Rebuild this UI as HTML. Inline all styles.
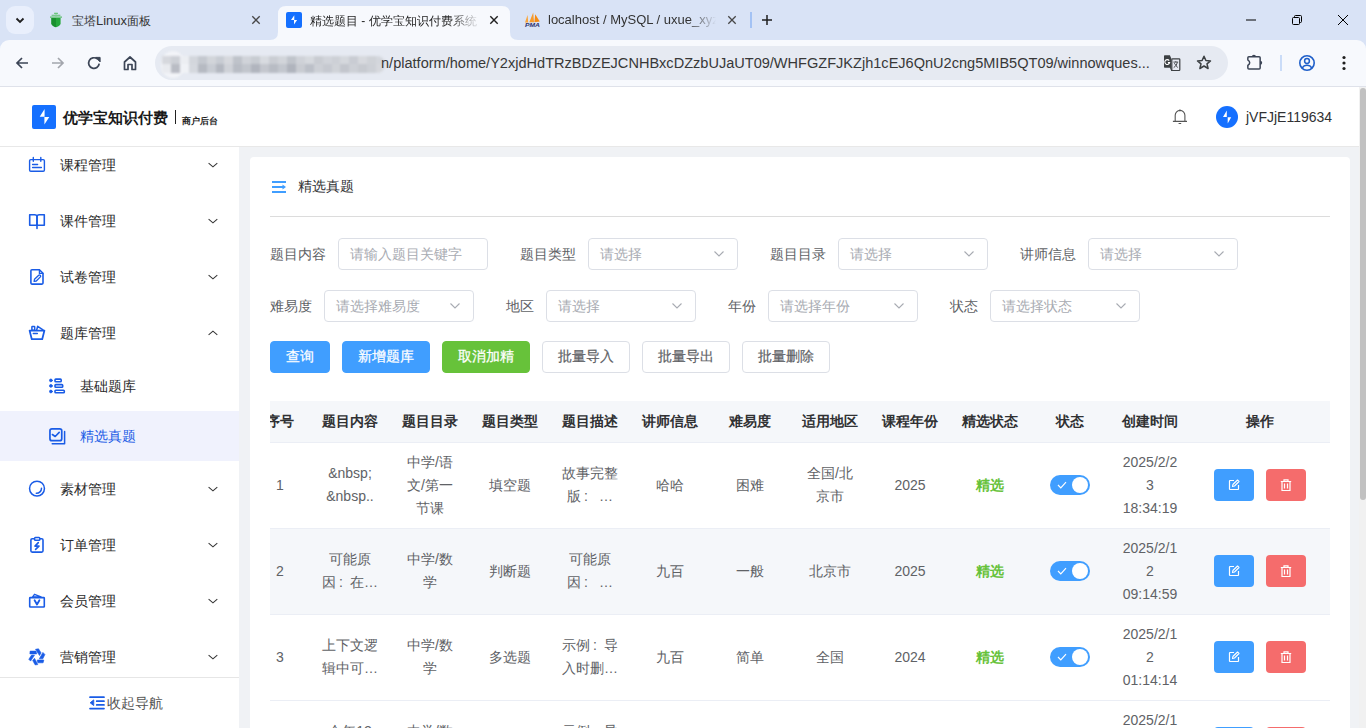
<!DOCTYPE html>
<html><head><meta charset="utf-8">
<style>
*{box-sizing:border-box;margin:0;padding:0}
html,body{width:1366px;height:728px;overflow:hidden}
body{font-family:"Liberation Sans",sans-serif;font-size:14px;color:#303133;background:#d9e3f6;position:relative}
.abs{position:absolute}
svg{display:block}
/* browser chrome */
#tabs{left:0;top:0;width:1366px;height:40px;background:#d9e3f6}
.tabbtn{left:6px;top:6px;width:28px;height:28px;border-radius:9px;background:#e9effc}
.tabtxt{font-size:12px;color:#1f1f1f;white-space:nowrap;top:13px}
#toolbar{left:0;top:40px;width:1366px;height:47px;background:#f7f9fd;border-bottom:1px solid #dfe2ea;border-radius:9px 9px 0 0}
#addr{left:155px;top:46px;width:1073px;height:34px;border-radius:17px;background:#e6eaf2}
.url{left:381px;top:54px;font-size:14.55px;line-height:18px;color:#383838;white-space:nowrap}
/* page */
#page{left:0;top:87px;width:1359px;height:641px;background:#f0f2f5;overflow:hidden}
#hdr{left:0;top:0;width:1359px;height:60px;background:#fff;border-bottom:1px solid #e8e8e8;z-index:2}
#side{left:0;top:60px;width:239px;height:581px;background:#fff}
.mi{left:0;width:239px;height:56px}
.mi .t{position:absolute;left:60px;top:0;line-height:56px;font-size:14px;color:#2b2b2b}
.mi .ic{position:absolute;left:28px;top:20px}
.mi .ch{position:absolute;left:207px;top:24px}
#card{left:250px;top:70px;width:1100px;height:620px;background:#fff;border-radius:4px;overflow:hidden}
.lab{font-size:14px;line-height:32px;color:#606266;white-space:nowrap}
.inp{width:150px;height:32px;border:1px solid #dcdfe6;border-radius:4px;background:#fff;font-size:14px;line-height:30px;padding-left:11px;color:#a8abb2;white-space:nowrap}
.inp .sc{position:absolute;right:12px;top:11px}
.btn{height:32px;border-radius:4px;font-size:14px;line-height:29px;text-align:center;border:1px solid transparent;white-space:nowrap}
.bp{background:#409eff;color:#fff;border-color:#409eff;-webkit-text-stroke:.25px #fff}
.bs{background:#67c23a;color:#fff;border-color:#67c23a;-webkit-text-stroke:.25px #fff}
.bd{background:#fff;color:#606266;border-color:#dcdfe6;-webkit-text-stroke:.2px #606266}
.th{width:100px;height:41px;line-height:41px;text-align:center;font-weight:bold;color:#303133;font-size:14px;white-space:nowrap}
.td{width:100px;height:86px;display:flex;align-items:center;justify-content:center;text-align:center;font-size:14px;line-height:23px;color:#606266;white-space:nowrap}
.cl{display:inline-block;width:14px;text-align:left;padding-left:3px}
.sw{position:relative;width:40px;height:20px;border-radius:10px;background:#409eff}
.knob{position:absolute;left:22px;top:2px;width:16px;height:16px;border-radius:50%;background:#fff}
.ob{width:40px;height:32px;border-radius:4px;display:flex;align-items:center;justify-content:center}
#sb{left:1359px;top:87px;width:7px;height:641px;background:#f1f1f1}
#sbt{left:1360px;top:88px;width:6px;height:412px;background:#c1c1c1;border-radius:3px}
</style></head><body>
<div id="tabs" class="abs"></div>
<div class="abs tabbtn"><svg width="28" height="28"><path d="M10.5 12.5l3.5 3.5 3.5-3.5" fill="none" stroke="#1f1f1f" stroke-width="1.8"/></svg></div>
<!-- tab1 -->
<svg class="abs" style="left:48px;top:12px" width="16" height="16" viewBox="0 0 16 16"><path d="M3.4 6H12.6V11.6Q12.6 13.9 8 15.2Q3.4 13.9 3.4 11.6Z" fill="#25a83c"/><path d="M3.4 6H8V15.2Q3.4 13.9 3.4 11.6Z" fill="#1a8f2f"/><path d="M6.2 1.4H9.8M3.6 3.3H12.4M2 5.1H14" stroke="#5bbf6c" stroke-width="1.1"/><path d="M8 1v5" stroke="#7fd08d" stroke-width=".9"/></svg>
<div class="abs tabtxt" style="left:72px;color:#333">宝塔<span style="font-size:13px">Linux</span>面板</div>
<svg class="abs" style="left:251px;top:15px" width="10" height="10"><path d="M1.3 1.3l7.4 7.4M8.7 1.3l-7.4 7.4" stroke="#474747" stroke-width="1.3"/></svg>
<!-- active tab -->
<svg class="abs" style="left:270px;top:6px" width="248" height="34" viewBox="0 0 248 34"><path d="M0 34 Q8 34 8 26 V8 Q8 0 16 0 H232 Q240 0 240 8 V26 Q240 34 248 34 Z" fill="#f7f9fd"/></svg>
<div class="abs" style="left:286px;top:12px;width:16px;height:16px;background:#1570ff;border-radius:2px"><svg width="16" height="16" viewBox="0 0 16 16"><path d="M8.3 3.2L5 7.9H8.3ZM8 8.1H11.1L8 12.6Z" fill="#fff"/></svg></div>
<div class="abs tabtxt" style="left:310px;width:172px;overflow:hidden;-webkit-mask-image:linear-gradient(90deg,#000 80%,transparent)">精选题目 - 优学宝知识付费系统</div>
<svg class="abs" style="left:489px;top:15px" width="10" height="10"><path d="M1.3 1.3l7.4 7.4M8.7 1.3l-7.4 7.4" stroke="#1f1f1f" stroke-width="1.4"/></svg>
<!-- tab3 -->
<svg class="abs" style="left:523px;top:12px" width="18" height="16" viewBox="0 0 18 16"><path d="M2 10.5L4.6 2.9L5.2 10.5Z" fill="#f9a53b"/><path d="M6.3 10.3L10.2 0.6L11 10.3Z" fill="#f79a2a"/><path d="M11.4 10.3L12.2 2.3L16.8 9.5Z" fill="#f68a12"/><text x="2" y="15" font-size="5.6" font-weight="bold" font-style="italic" fill="#2d3470" font-family="Liberation Sans" textLength="15" lengthAdjust="spacingAndGlyphs">PMA</text></svg>
<div class="abs tabtxt" style="left:548px;top:12px;font-size:13px;color:#333;width:168px;overflow:hidden;-webkit-mask-image:linear-gradient(90deg,#000 84%,transparent)">localhost / MySQL / uxue_xyz</div>
<svg class="abs" style="left:727px;top:15px" width="10" height="10"><path d="M1.3 1.3l7.4 7.4M8.7 1.3l-7.4 7.4" stroke="#474747" stroke-width="1.3"/></svg>
<div class="abs" style="left:750px;top:12px;width:1.5px;height:16px;background:#a3c2f4"></div>
<svg class="abs" style="left:761px;top:14px" width="12" height="12"><path d="M6 1v10M1 6h10" stroke="#1f1f1f" stroke-width="1.5"/></svg>
<!-- window controls -->
<svg class="abs" style="left:1245px;top:14px" width="12" height="12"><path d="M1 6h10" stroke="#000" stroke-width="1"/></svg>
<svg class="abs" style="left:1291px;top:14px" width="12" height="12"><rect x="1.5" y="3.5" width="7" height="7" rx="1" fill="none" stroke="#000"/><path d="M3.5 3.5V2.5a1 1 0 0 1 1-1h5a1 1 0 0 1 1 1v5a1 1 0 0 1-1 1h-1" fill="none" stroke="#000"/></svg>
<svg class="abs" style="left:1337px;top:14px" width="12" height="12"><path d="M1 1l10 10M11 1L1 11" stroke="#000" stroke-width="1"/></svg>
<div id="toolbar" class="abs"></div>
<div id="addr" class="abs"></div>
<svg class="abs" style="left:14px;top:55px" width="16" height="16" viewBox="0 0 16 16"><path d="M14 8H3M8 3L3 8l5 5" fill="none" stroke="#3c4556" stroke-width="1.7"/></svg>
<svg class="abs" style="left:50px;top:55px" width="16" height="16" viewBox="0 0 16 16"><path d="M2 8h11M8 3l5 5-5 5" fill="none" stroke="#a3a6ad" stroke-width="1.7"/></svg>
<svg class="abs" style="left:86px;top:55px" width="16" height="16" viewBox="0 0 16 16"><path d="M13.2 8.6A5.3 5.3 0 1 1 11.2 3.9" fill="none" stroke="#3c4556" stroke-width="1.7"/><path d="M9.6 2.4H14.1V6.9Z" fill="#3c4556" stroke="#3c4556" stroke-width="1" stroke-linejoin="round"/></svg>
<svg class="abs" style="left:122px;top:55px" width="16" height="16" viewBox="0 0 16 16"><path d="M2.5 14.5V7L8 2l5.5 5v7.5H10v-5H6v5z" fill="none" stroke="#3c4556" stroke-width="1.7" stroke-linejoin="round"/></svg>
<div class="abs" style="left:161px;top:51px;width:24px;height:27px;border-radius:50%;background:#f2f4f8;filter:blur(1px)"></div>
<div class="abs" style="left:162px;top:56px;width:223px;height:17px;overflow:hidden;filter:blur(1.2px);border-radius:0 8px 8px 0">
<div style="display:flex">
<div style="width:9px;height:8px;background:#d6d8dd"></div><div style="width:9px;height:8px;background:#cdd0d6"></div><div style="width:9px;height:8px;background:#eceef2"></div><div style="width:9px;height:8px;background:#d3d6dc"></div><div style="width:9px;height:8px;background:#c4c8cf"></div><div style="width:9px;height:8px;background:#d2d5da"></div><div style="width:9px;height:8px;background:#c8ccd3"></div><div style="width:9px;height:8px;background:#d6d8dd"></div><div style="width:9px;height:8px;background:#bfc3ca"></div><div style="width:9px;height:8px;background:#d0d3d9"></div><div style="width:9px;height:8px;background:#c8ccd2"></div><div style="width:9px;height:8px;background:#d8dbe0"></div><div style="width:9px;height:8px;background:#cacdd3"></div><div style="width:9px;height:8px;background:#d2d5da"></div><div style="width:9px;height:8px;background:#c0c4cb"></div><div style="width:9px;height:8px;background:#cfd2d8"></div><div style="width:9px;height:8px;background:#d6d9de"></div><div style="width:9px;height:8px;background:#c9ccd2"></div><div style="width:9px;height:8px;background:#d1d4da"></div><div style="width:9px;height:8px;background:#cdd0d6"></div><div style="width:9px;height:8px;background:#d5d8dd"></div><div style="width:9px;height:8px;background:#c9ccd3"></div><div style="width:9px;height:8px;background:#d7d9de"></div><div style="width:9px;height:8px;background:#cfd2d7"></div><div style="width:9px;height:8px;background:#d3d6dc"></div></div>
<div style="display:flex">
<div style="width:9px;height:9px;background:#e9ebef"></div><div style="width:9px;height:9px;background:#b9bcc4"></div><div style="width:9px;height:9px;background:#f0f2f6"></div><div style="width:9px;height:9px;background:#d5d8de"></div><div style="width:9px;height:9px;background:#b6bac2"></div><div style="width:9px;height:9px;background:#c8ccd3"></div><div style="width:9px;height:9px;background:#b4b8c1"></div><div style="width:9px;height:9px;background:#cfd2d8"></div><div style="width:9px;height:9px;background:#b9bdc5"></div><div style="width:9px;height:9px;background:#c2c6cd"></div><div style="width:9px;height:9px;background:#b1b5be"></div><div style="width:9px;height:9px;background:#c4c7ce"></div><div style="width:9px;height:9px;background:#b8bcc4"></div><div style="width:9px;height:9px;background:#c3c7ce"></div><div style="width:9px;height:9px;background:#b0b4bd"></div><div style="width:9px;height:9px;background:#c9ccd2"></div><div style="width:9px;height:9px;background:#bcc0c8"></div><div style="width:9px;height:9px;background:#cdd0d6"></div><div style="width:9px;height:9px;background:#c6c9d0"></div><div style="width:9px;height:9px;background:#d0d3d8"></div><div style="width:9px;height:9px;background:#c3c6cd"></div><div style="width:9px;height:9px;background:#cdd0d6"></div><div style="width:9px;height:9px;background:#c7cad0"></div><div style="width:9px;height:9px;background:#cdd0d6"></div><div style="width:9px;height:9px;background:#d6d8dd"></div></div>
</div>
<div class="abs url">n/platform/home/Y2xjdHdTRzBDZEJCNHBxcDZzbUJaUT09/WHFGZFJKZjh1cEJ6QnU2cng5MIB5QT09/winnowques...</div>
<svg class="abs" style="left:1158px;top:50px" width="26" height="26" viewBox="0 0 26 26"><path d="M6.7 5.3H11.9L13.3 8.4V17.7H12.8L14.3 20.9H13.3L11.9 17.7H6.7a.7 .7 0 0 1-.7-.7V6a.7 .7 0 0 1 .7-.7Z" fill="#3c4043"/><rect x="13.8" y="8.8" width="8" height="11.7" rx=".7" fill="#e6eaf2" stroke="#3c4043" stroke-width="1.2"/><path d="M13.3 17.6L14.4 20.9H13.6Z" fill="#3c4043"/><path d="M11.2 10.6A2.4 2.4 0 1 0 11.6 12.6H9.9" fill="none" stroke="#fff" stroke-width="1.1"/><path d="M15.4 12.1H20.2M17.8 11.2V12.1M16.3 13.2L19.6 17.6M19.3 12.3C18.8 14.7 17.5 16.5 15.7 17.6" fill="none" stroke="#3c4043" stroke-width=".9"/></svg>
<svg class="abs" style="left:1195px;top:54px" width="18" height="18" viewBox="0 0 18 18"><path d="M9 2.2l1.9 4.3 4.6.4-3.5 3 1.1 4.6L9 12l-4.1 2.5 1.1-4.6-3.5-3 4.6-.4z" fill="none" stroke="#3c4043" stroke-width="1.5" stroke-linejoin="round"/></svg>
<svg class="abs" style="left:1240px;top:50px" width="26" height="26" viewBox="0 0 26 26"><path d="M7.85 7.75A1 1 0 0 1 8.85 6.75H19.15A1 1 0 0 1 20.15 7.75V18.05A1 1 0 0 1 19.15 19.05H8.85A1 1 0 0 1 7.85 18.05V15.4Q11.55 12.65 7.85 9.9Z" fill="none" stroke="#3c4556" stroke-width="1.5" stroke-linejoin="round"/><path d="M11.8 6.8A2.1 2.1 0 0 1 16 6.8ZM20.1 10.7A2.1 2.1 0 0 1 20.1 14.9Z" fill="#3c4556"/></svg>
<div class="abs" style="left:1280px;top:55px;width:2px;height:16px;background:#cadcf8"></div>
<svg class="abs" style="left:1298px;top:54px" width="18" height="18" viewBox="0 0 18 18"><circle cx="9" cy="9" r="7.2" fill="none" stroke="#1f5fc9" stroke-width="1.6"/><circle cx="9" cy="7" r="2.4" fill="none" stroke="#1f5fc9" stroke-width="1.5"/><path d="M4.3 14c1-2 2.7-2.8 4.7-2.8s3.7.8 4.7 2.8" fill="none" stroke="#1f5fc9" stroke-width="1.5"/></svg>
<svg class="abs" style="left:1338px;top:54px" width="12" height="18" viewBox="0 0 12 18"><circle cx="6" cy="3.5" r="1.6" fill="#1f1f1f"/><circle cx="6" cy="9" r="1.6" fill="#1f1f1f"/><circle cx="6" cy="14.5" r="1.6" fill="#1f1f1f"/></svg>
<div id="page" class="abs">
  <div id="hdr" class="abs">
    <div class="abs" style="left:32px;top:18px;width:24px;height:24px;background:#1570ff;border-radius:2px"><svg width="24" height="24" viewBox="0 0 24 24"><path d="M12.6 4.1L7.7 11.8H12.6ZM12.4 12H17.3L12.4 19.5Z" fill="#fff"/></svg></div>
    <div class="abs" style="left:63px;top:20px;font-size:15px;font-weight:bold;color:#1a1a1a;line-height:22px">优学宝知识付费</div>
    <div class="abs" style="left:175px;top:23px;width:1.4px;height:14px;background:#222"></div>
    <div class="abs" style="left:182px;top:27px;font-size:9px;font-weight:bold;color:#1a1a1a;line-height:14px">商户后台</div>
    <svg class="abs" style="left:1170px;top:21px" width="20" height="20" viewBox="0 0 20 20"><path d="M5.2 13.4V7.2a4.85 4.85 0 0 1 9.7 0v6.2M2.9 13.4h14.1" fill="none" stroke="#555" stroke-width="1.1"/><circle cx="9.9" cy="2.4" r=".9" fill="#555"/><path d="M8.6 15.5h2.6" stroke="#555" stroke-width="1"/></svg>
    <div class="abs" style="left:1216px;top:19px;width:22px;height:22px;border-radius:50%;background:#1570ff"><svg width="22" height="22" viewBox="0 0 22 22"><path d="M10.8 4.5V11H7ZM11.7 11.3H15.2L11.7 17.4Z" fill="#fff"/></svg></div>
    <div class="abs" style="left:1246px;top:22px;font-size:14px;color:#303133;line-height:16px">jVFJjE119634</div>
  </div>
  <div id="side" class="abs">
<div class="abs mi" style="top:-10px"><div class="t">课程管理</div><svg class="ch" width="12" height="8" viewBox="0 0 12 8"><path d="M1.6 2.2L5.95 5.9L10.3 2.2" fill="none" stroke="#333" stroke-width="1.05"/></svg></div>
<div class="abs mi" style="top:46px"><div class="t">课件管理</div><svg class="ch" width="12" height="8" viewBox="0 0 12 8"><path d="M1.6 2.2L5.95 5.9L10.3 2.2" fill="none" stroke="#333" stroke-width="1.05"/></svg></div>
<div class="abs mi" style="top:102px"><div class="t">试卷管理</div><svg class="ch" width="12" height="8" viewBox="0 0 12 8"><path d="M1.6 2.2L5.95 5.9L10.3 2.2" fill="none" stroke="#333" stroke-width="1.05"/></svg></div>
<div class="abs mi" style="top:158px"><div class="t">题库管理</div><svg class="ch" width="12" height="8" viewBox="0 0 12 8"><path d="M1.6 5.9L5.95 2.2L10.3 5.9" fill="none" stroke="#333" stroke-width="1.05"/></svg></div>
<div class="abs mi" style="top:214px;height:50px"><div class="t" style="left:80px;line-height:50px">基础题库</div></div>
<div class="abs mi" style="top:264px;height:50px;background:#f0f2fd"><div class="t" style="left:80px;line-height:50px;color:#1a5ce6">精选真题</div></div>
<div class="abs mi" style="top:314px"><div class="t">素材管理</div><svg class="ch" width="12" height="8" viewBox="0 0 12 8"><path d="M1.6 2.2L5.95 5.9L10.3 2.2" fill="none" stroke="#333" stroke-width="1.05"/></svg></div>
<div class="abs mi" style="top:370px"><div class="t">订单管理</div><svg class="ch" width="12" height="8" viewBox="0 0 12 8"><path d="M1.6 2.2L5.95 5.9L10.3 2.2" fill="none" stroke="#333" stroke-width="1.05"/></svg></div>
<div class="abs mi" style="top:426px"><div class="t">会员管理</div><svg class="ch" width="12" height="8" viewBox="0 0 12 8"><path d="M1.6 2.2L5.95 5.9L10.3 2.2" fill="none" stroke="#333" stroke-width="1.05"/></svg></div>
<div class="abs mi" style="top:482px"><div class="t">营销管理</div><svg class="ch" width="12" height="8" viewBox="0 0 12 8"><path d="M1.6 2.2L5.95 5.9L10.3 2.2" fill="none" stroke="#333" stroke-width="1.05"/></svg></div>
<div class="abs" style="left:0;top:530px;width:239px;height:51px;background:#fff;border-top:1px solid #e6e6e6">
<div class="abs" style="left:107px;top:15px;line-height:20px;font-size:14px;color:#555">收起导航</div></div>
  </div>
<div id="card" class="abs">
<svg class="abs" style="left:22px;top:24px" width="14" height="12" viewBox="0 0 14 12"><path d="M0 1h14M0 6h11M0 11h14" stroke="#409eff" stroke-width="2"/><path d="M10.5 3.5L14 6l-3.5 2.5z" fill="#409eff"/></svg>
<div class="abs" style="left:48px;top:19px;font-size:14px;line-height:20px;color:#303133">精选真题</div>
<div class="abs" style="left:20px;top:59px;width:1060px;height:1px;background:#dcdcdc"></div>
<div class="abs lab" style="left:20px;top:81px">题目内容</div><div class="abs inp" style="left:88px;top:81px">请输入题目关键字</div>
<div class="abs lab" style="left:270px;top:81px">题目类型</div><div class="abs inp" style="left:338px;top:81px">请选择<svg class="sc" width="12" height="8" viewBox="0 0 12 8"><path d="M1.5 1.5l4.5 4.5 4.5-4.5" fill="none" stroke="#a8abb2" stroke-width="1.1"/></svg></div>
<div class="abs lab" style="left:520px;top:81px">题目目录</div><div class="abs inp" style="left:588px;top:81px">请选择<svg class="sc" width="12" height="8" viewBox="0 0 12 8"><path d="M1.5 1.5l4.5 4.5 4.5-4.5" fill="none" stroke="#a8abb2" stroke-width="1.1"/></svg></div>
<div class="abs lab" style="left:770px;top:81px">讲师信息</div><div class="abs inp" style="left:838px;top:81px">请选择<svg class="sc" width="12" height="8" viewBox="0 0 12 8"><path d="M1.5 1.5l4.5 4.5 4.5-4.5" fill="none" stroke="#a8abb2" stroke-width="1.1"/></svg></div>
<div class="abs lab" style="left:20px;top:133px">难易度</div><div class="abs inp" style="left:74px;top:133px">请选择难易度<svg class="sc" width="12" height="8" viewBox="0 0 12 8"><path d="M1.5 1.5l4.5 4.5 4.5-4.5" fill="none" stroke="#a8abb2" stroke-width="1.1"/></svg></div>
<div class="abs lab" style="left:256px;top:133px">地区</div><div class="abs inp" style="left:296px;top:133px">请选择<svg class="sc" width="12" height="8" viewBox="0 0 12 8"><path d="M1.5 1.5l4.5 4.5 4.5-4.5" fill="none" stroke="#a8abb2" stroke-width="1.1"/></svg></div>
<div class="abs lab" style="left:478px;top:133px">年份</div><div class="abs inp" style="left:518px;top:133px">请选择年份<svg class="sc" width="12" height="8" viewBox="0 0 12 8"><path d="M1.5 1.5l4.5 4.5 4.5-4.5" fill="none" stroke="#a8abb2" stroke-width="1.1"/></svg></div>
<div class="abs lab" style="left:700px;top:133px">状态</div><div class="abs inp" style="left:740px;top:133px">请选择状态<svg class="sc" width="12" height="8" viewBox="0 0 12 8"><path d="M1.5 1.5l4.5 4.5 4.5-4.5" fill="none" stroke="#a8abb2" stroke-width="1.1"/></svg></div>
<div class="abs btn bp" style="left:20px;top:184px;width:60px">查询</div>
<div class="abs btn bp" style="left:92px;top:184px;width:88px">新增题库</div>
<div class="abs btn bs" style="left:192px;top:184px;width:88px">取消加精</div>
<div class="abs btn bd" style="left:292px;top:184px;width:88px">批量导入</div>
<div class="abs btn bd" style="left:392px;top:184px;width:88px">批量导出</div>
<div class="abs btn bd" style="left:492px;top:184px;width:88px">批量删除</div>
<div id="tbl" class="abs" style="left:20px;top:244px;width:1060px;height:400px;overflow:hidden">
<div class="abs" style="left:0;top:0;width:1060px;height:42px;background:#f5f7fa;border-bottom:1px solid #ebeef5"></div>
<div class="abs th" style="left:-40px;top:0">序号</div>
<div class="abs th" style="left:30px;top:0">题目内容</div>
<div class="abs th" style="left:110px;top:0">题目目录</div>
<div class="abs th" style="left:190px;top:0">题目类型</div>
<div class="abs th" style="left:270px;top:0">题目描述</div>
<div class="abs th" style="left:350px;top:0">讲师信息</div>
<div class="abs th" style="left:430px;top:0">难易度</div>
<div class="abs th" style="left:510px;top:0">适用地区</div>
<div class="abs th" style="left:590px;top:0">课程年份</div>
<div class="abs th" style="left:670px;top:0">精选状态</div>
<div class="abs th" style="left:750px;top:0">状态</div>
<div class="abs th" style="left:830px;top:0">创建时间</div>
<div class="abs th" style="left:940px;top:0">操作</div>
<div class="abs" style="left:0;top:42px;width:1060px;height:86px;background:#fff;border-bottom:1px solid #ebeef5"></div>
<div class="abs td" style="left:-40px;top:41px"><div>1</div></div>
<div class="abs td" style="left:30px;top:41px"><div>&amp;nbsp;<br>&amp;nbsp..</div></div>
<div class="abs td" style="left:110px;top:41px"><div>中学/语<br>文/第一<br>节课</div></div>
<div class="abs td" style="left:190px;top:41px"><div>填空题</div></div>
<div class="abs td" style="left:270px;top:41px"><div>故事完整<br>版<span class="cl">:</span>&nbsp;…</div></div>
<div class="abs td" style="left:350px;top:41px"><div>哈哈</div></div>
<div class="abs td" style="left:430px;top:41px"><div>困难</div></div>
<div class="abs td" style="left:510px;top:41px"><div>全国/北<br>京市</div></div>
<div class="abs td" style="left:590px;top:41px"><div>2025</div></div>
<div class="abs td" style="left:670px;top:41px;color:#67c23a;font-weight:bold"><div>精选</div></div>
<div class="abs" style="left:780px;top:74px"><div class="sw"><svg class="abs" style="left:7px;top:6px" width="10" height="8" viewBox="0 0 10 8"><path d="M1 4l2.8 2.8L9 1.2" fill="none" stroke="#fff" stroke-width="1.2"/></svg><div class="knob"></div></div></div>
<div class="abs td" style="left:830px;top:41px"><div>2025/2/2<br>3<br>18:34:19</div></div>
<div class="abs ob" style="left:944px;top:68px;background:#409eff"><svg width="14" height="14" viewBox="0 0 14 14"><path d="M7 2.5H3a.5.5 0 0 0-.5.5v8a.5.5 0 0 0 .5.5h8a.5.5 0 0 0 .5-.5V7" fill="none" stroke="#fff" stroke-width="1.2"/><path d="M5.5 8.5l.4-2L10.5 2l1.5 1.5L7.5 8z" fill="none" stroke="#fff" stroke-width="1.1" stroke-linejoin="round"/></svg></div>
<div class="abs ob" style="left:996px;top:68px;background:#f56c6c"><svg width="14" height="14" viewBox="0 0 14 14"><path d="M1.8 3.5h10.4M5 3.5V1.8h4v1.7M3 3.5v9h8v-9M5.5 5.5v5M8.5 5.5v5" fill="none" stroke="#fff" stroke-width="1.2"/></svg></div>
<div class="abs" style="left:0;top:128px;width:1060px;height:86px;background:#f5f7fa;border-bottom:1px solid #ebeef5"></div>
<div class="abs td" style="left:-40px;top:127px"><div>2</div></div>
<div class="abs td" style="left:30px;top:127px"><div>可能原<br>因<span class="cl">:</span>在…</div></div>
<div class="abs td" style="left:110px;top:127px"><div>中学/数<br>学</div></div>
<div class="abs td" style="left:190px;top:127px"><div>判断题</div></div>
<div class="abs td" style="left:270px;top:127px"><div>可能原<br>因<span class="cl">:</span>&nbsp;…</div></div>
<div class="abs td" style="left:350px;top:127px"><div>九百</div></div>
<div class="abs td" style="left:430px;top:127px"><div>一般</div></div>
<div class="abs td" style="left:510px;top:127px"><div>北京市</div></div>
<div class="abs td" style="left:590px;top:127px"><div>2025</div></div>
<div class="abs td" style="left:670px;top:127px;color:#67c23a;font-weight:bold"><div>精选</div></div>
<div class="abs" style="left:780px;top:160px"><div class="sw"><svg class="abs" style="left:7px;top:6px" width="10" height="8" viewBox="0 0 10 8"><path d="M1 4l2.8 2.8L9 1.2" fill="none" stroke="#fff" stroke-width="1.2"/></svg><div class="knob"></div></div></div>
<div class="abs td" style="left:830px;top:127px"><div>2025/2/1<br>2<br>09:14:59</div></div>
<div class="abs ob" style="left:944px;top:154px;background:#409eff"><svg width="14" height="14" viewBox="0 0 14 14"><path d="M7 2.5H3a.5.5 0 0 0-.5.5v8a.5.5 0 0 0 .5.5h8a.5.5 0 0 0 .5-.5V7" fill="none" stroke="#fff" stroke-width="1.2"/><path d="M5.5 8.5l.4-2L10.5 2l1.5 1.5L7.5 8z" fill="none" stroke="#fff" stroke-width="1.1" stroke-linejoin="round"/></svg></div>
<div class="abs ob" style="left:996px;top:154px;background:#f56c6c"><svg width="14" height="14" viewBox="0 0 14 14"><path d="M1.8 3.5h10.4M5 3.5V1.8h4v1.7M3 3.5v9h8v-9M5.5 5.5v5M8.5 5.5v5" fill="none" stroke="#fff" stroke-width="1.2"/></svg></div>
<div class="abs" style="left:0;top:214px;width:1060px;height:86px;background:#fff;border-bottom:1px solid #ebeef5"></div>
<div class="abs td" style="left:-40px;top:213px"><div>3</div></div>
<div class="abs td" style="left:30px;top:213px"><div>上下文逻<br>辑中可…</div></div>
<div class="abs td" style="left:110px;top:213px"><div>中学/数<br>学</div></div>
<div class="abs td" style="left:190px;top:213px"><div>多选题</div></div>
<div class="abs td" style="left:270px;top:213px"><div>示例<span class="cl">:</span>导<br>入时删…</div></div>
<div class="abs td" style="left:350px;top:213px"><div>九百</div></div>
<div class="abs td" style="left:430px;top:213px"><div>简单</div></div>
<div class="abs td" style="left:510px;top:213px"><div>全国</div></div>
<div class="abs td" style="left:590px;top:213px"><div>2024</div></div>
<div class="abs td" style="left:670px;top:213px;color:#67c23a;font-weight:bold"><div>精选</div></div>
<div class="abs" style="left:780px;top:246px"><div class="sw"><svg class="abs" style="left:7px;top:6px" width="10" height="8" viewBox="0 0 10 8"><path d="M1 4l2.8 2.8L9 1.2" fill="none" stroke="#fff" stroke-width="1.2"/></svg><div class="knob"></div></div></div>
<div class="abs td" style="left:830px;top:213px"><div>2025/2/1<br>2<br>01:14:14</div></div>
<div class="abs ob" style="left:944px;top:240px;background:#409eff"><svg width="14" height="14" viewBox="0 0 14 14"><path d="M7 2.5H3a.5.5 0 0 0-.5.5v8a.5.5 0 0 0 .5.5h8a.5.5 0 0 0 .5-.5V7" fill="none" stroke="#fff" stroke-width="1.2"/><path d="M5.5 8.5l.4-2L10.5 2l1.5 1.5L7.5 8z" fill="none" stroke="#fff" stroke-width="1.1" stroke-linejoin="round"/></svg></div>
<div class="abs ob" style="left:996px;top:240px;background:#f56c6c"><svg width="14" height="14" viewBox="0 0 14 14"><path d="M1.8 3.5h10.4M5 3.5V1.8h4v1.7M3 3.5v9h8v-9M5.5 5.5v5M8.5 5.5v5" fill="none" stroke="#fff" stroke-width="1.2"/></svg></div>
<div class="abs" style="left:0;top:300px;width:1060px;height:86px;background:#fff;border-bottom:1px solid #ebeef5"></div>
<div class="abs td" style="left:-40px;top:299px"><div>4</div></div>
<div class="abs td" style="left:30px;top:299px"><div>今年12<br>月…</div></div>
<div class="abs td" style="left:110px;top:299px"><div>中学/数<br>学</div></div>
<div class="abs td" style="left:190px;top:299px"><div>单选题</div></div>
<div class="abs td" style="left:270px;top:299px"><div>示例<span class="cl">:</span>导<br>入…</div></div>
<div class="abs td" style="left:350px;top:299px"><div>九百</div></div>
<div class="abs td" style="left:430px;top:299px"><div>简单</div></div>
<div class="abs td" style="left:510px;top:299px"><div>全国</div></div>
<div class="abs td" style="left:590px;top:299px"><div>2024</div></div>
<div class="abs td" style="left:670px;top:299px;color:#67c23a;font-weight:bold"><div>精选</div></div>
<div class="abs" style="left:780px;top:332px"><div class="sw"><svg class="abs" style="left:7px;top:6px" width="10" height="8" viewBox="0 0 10 8"><path d="M1 4l2.8 2.8L9 1.2" fill="none" stroke="#fff" stroke-width="1.2"/></svg><div class="knob"></div></div></div>
<div class="abs td" style="left:830px;top:299px"><div>2025/2/1<br>2<br>01:14:14</div></div>
<div class="abs ob" style="left:944px;top:326px;background:#409eff"><svg width="14" height="14" viewBox="0 0 14 14"><path d="M7 2.5H3a.5.5 0 0 0-.5.5v8a.5.5 0 0 0 .5.5h8a.5.5 0 0 0 .5-.5V7" fill="none" stroke="#fff" stroke-width="1.2"/><path d="M5.5 8.5l.4-2L10.5 2l1.5 1.5L7.5 8z" fill="none" stroke="#fff" stroke-width="1.1" stroke-linejoin="round"/></svg></div>
<div class="abs ob" style="left:996px;top:326px;background:#f56c6c"><svg width="14" height="14" viewBox="0 0 14 14"><path d="M1.8 3.5h10.4M5 3.5V1.8h4v1.7M3 3.5v9h8v-9M5.5 5.5v5M8.5 5.5v5" fill="none" stroke="#fff" stroke-width="1.2"/></svg></div>
</div>
</div>
</div>
<svg class="abs" style="left:24px;top:152px;z-index:3" width="26" height="24" viewBox="0 0 26 24" fill="none" stroke="#1a5ce6" stroke-linecap="round" stroke-linejoin="round"><rect x="5.6" y="7.6" width="14.8" height="11.6" rx="1.2" stroke-width="1.4"/><path d="M9.3 5.4v3.8M16.8 5.4v3.8" stroke-width="1.4"/><path d="M8.6 12.5h5M8.6 15.5h8.8" stroke-width="1.4"/></svg>
<svg class="abs" style="left:24px;top:208px;z-index:3" width="26" height="24" viewBox="0 0 26 24" fill="none" stroke="#1a5ce6" stroke-linecap="round" stroke-linejoin="round"><path d="M5.7 6.7H10.6Q13 6.7 13 8.6V17.2H5.7Z" stroke-width="1.6"/><path d="M20.3 6.7H15.4Q13 6.7 13 8.6V17.2H20.3Z" stroke-width="1.6"/><path d="M13 17v3.4" stroke-width="1.6"/></svg>
<svg class="abs" style="left:24px;top:264px;z-index:3" width="26" height="24" viewBox="0 0 26 24" fill="none" stroke="#1a5ce6" stroke-linecap="round" stroke-linejoin="round"><path d="M6.9 6.7a1 1 0 0 1 1-1H15.4L19 9.2V19.1a1 1 0 0 1-1 1H7.9a1 1 0 0 1-1-1Z" stroke-width="1.6"/><path d="M15.4 5.9V9.4H18.8" stroke-width="1.3"/><path d="M10.1 17.4l.4-2.1 4.2-4.1a1 1 0 0 1 1.4 0l.3.3a1 1 0 0 1 0 1.4L12.3 17Z" stroke-width="1.3"/></svg>
<svg class="abs" style="left:24px;top:320px;z-index:3" width="26" height="24" viewBox="0 0 26 24" fill="none" stroke="#1a5ce6" stroke-linecap="round" stroke-linejoin="round"><path d="M5.6 10.6H20.4L18.2 19.2H7.8Z" stroke-width="1.8"/><rect x="7.9" y="6.4" width="2.8" height="3.8" rx=".5" stroke-width="1.5"/><path d="M12.6 10.2L13.7 6.3L19 9.8" stroke-width="1.5"/><path d="M9.3 13.4h4" stroke-width="1.5"/></svg>
<svg class="abs" style="left:44px;top:374px;z-index:3" width="26" height="24" viewBox="0 0 26 24" fill="none" stroke="#1a5ce6" stroke-linecap="round" stroke-linejoin="round"><circle cx="6.9" cy="6.4" r="1.4" fill="#1a5ce6" stroke-width=".8"/><circle cx="6.9" cy="11.9" r="1.4" fill="#1a5ce6" stroke-width=".8"/><circle cx="6.9" cy="17.5" r="1.4" fill="#1a5ce6" stroke-width=".8"/><rect x="11" y="5.1" width="6.2" height="2.6" rx=".8" stroke-width="1.6"/><rect x="11" y="10.6" width="7.7" height="2.6" rx=".8" stroke-width="1.6"/><rect x="11" y="16.2" width="9.3" height="2.6" rx=".8" stroke-width="1.6"/></svg>
<svg class="abs" style="left:44px;top:424px;z-index:3" width="26" height="24" viewBox="0 0 26 24" fill="none" stroke="#1a5ce6" stroke-linecap="round" stroke-linejoin="round"><rect x="5.95" y="4.85" width="11.8" height="11.8" rx="2" stroke-width="1.7"/><path d="M8.4 10.5L11.2 12.5L15.2 8.4" stroke-width="1.6"/><path d="M8.2 19.8H20.6V7.6" stroke-width="1.5"/></svg>
<svg class="abs" style="left:24px;top:476px;z-index:3" width="26" height="24" viewBox="0 0 26 24" fill="none" stroke="#1a5ce6" stroke-linecap="round" stroke-linejoin="round"><circle cx="13" cy="12.6" r="7.45" stroke-width="1.5"/><path d="M12.3 17.3A5 5 0 0 0 17.5 12.3" stroke-width="1.5"/></svg>
<svg class="abs" style="left:24px;top:532px;z-index:3" width="26" height="24" viewBox="0 0 26 24" fill="none" stroke="#1a5ce6" stroke-linecap="round" stroke-linejoin="round"><rect x="6.9" y="6.7" width="12.1" height="13.4" rx="1.3" stroke-width="1.6"/><rect x="10.6" y="5.6" width="5.2" height="2.6" rx=".8" fill="#fff" stroke-width="1.5"/><path d="M14.3 10.6L11 14.1H15L11.6 17.4" stroke-width="1.6"/></svg>
<svg class="abs" style="left:24px;top:588px;z-index:3" width="26" height="24" viewBox="0 0 26 24" fill="none" stroke="#1a5ce6" stroke-linecap="round" stroke-linejoin="round"><rect x="5.7" y="9.6" width="14.6" height="9.4" rx=".6" stroke-width="1.6"/><path d="M8.3 9.3L10.5 6.3L17 8.8M9.9 8.6L14.5 9.1" stroke-width="1.4"/><path d="M10.6 12.2L13 16.5L15.4 12.2" stroke-width="1.8"/></svg>
<svg class="abs" style="left:24px;top:644px;z-index:3" width="26" height="24" viewBox="0 0 26 24" fill="#1a5ce6" stroke="#1a5ce6" stroke-width=".6" stroke-linejoin="round"><path d="M6.1 7.1H12L12.7 9.9H5.9Z"/><path d="M11.5 5.3L14.5 4.8L17.1 8.9L15.5 11.5Z"/><path d="M18.9 8.4L20.9 10.5L18.8 14.8H15.3Z"/><path d="M13.2 16H19.8L19.1 18.8H13.8Z"/><path d="M10.5 14.3L13.8 20.6L11.2 20.9L8.7 16.6Z"/><path d="M7.6 11L10.5 11.2L6.6 17.1L4.8 15.3Z"/></svg>
<svg class="abs" style="left:84px;top:690px;z-index:3" width="26" height="24" viewBox="0 0 26 24" fill="none" stroke="#1a5ce6" stroke-linecap="round" stroke-linejoin="round"><path d="M6 7.2H20M12.7 11.2H20M12.7 14.9H20M6 18.6H20" stroke-width="1.7"/><path d="M9.4 10.2L6.2 12.8L9.4 15.3Z" fill="#1a5ce6" stroke-width="1"/></svg>
<div id="sb" class="abs"></div>
<div id="sbt" class="abs"></div>
</body></html>
